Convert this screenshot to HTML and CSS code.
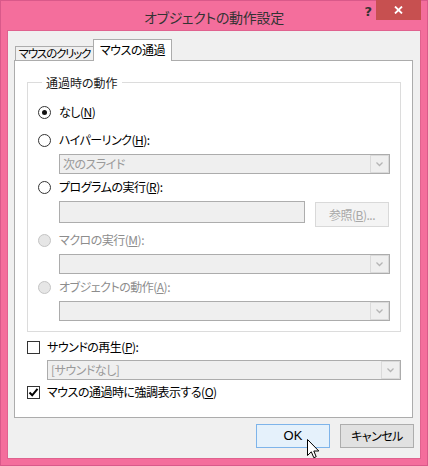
FILE: index.html
```html
<!DOCTYPE html>
<html lang="ja">
<head>
<meta charset="utf-8">
<title>オブジェクトの動作設定</title>
<link rel="stylesheet" href="styles.css">
</head>
<body>
<div class="window">
  <div class="titlebar">
    <div class="tb-side"></div>
    <div class="title">オブジェクトの動作設定</div>
    <div class="tb-side tb-controls">
      <span class="help">?</span>
      <span class="close"><svg width="9" height="8" viewBox="0 0 9 8"><path d="M1 0.5 L8 7.5 M8 0.5 L1 7.5" stroke="#fff" stroke-width="1.8" fill="none"/></svg></span>
    </div>
  </div>
  <div class="client">
    <div class="tabstrip">
      <div class="tab">マウスのクリック</div>
      <div class="tab active">マウスの通過</div>
    </div>
    <div class="panel">
      <div class="group">
        <div class="legend">通過時の動作</div>
        <div class="opt first">
          <span class="radio checked"></span><span class="lbl">なし(<u>N</u>)</span>
        </div>
        <div class="opt next">
          <span class="radio"></span><span class="lbl">ハイパーリンク(<u>H</u>):</span>
        </div>
        <div class="combo sub"><span class="combo-text">次のスライド</span><span class="arrow"><svg width="7" height="5" viewBox="0 0 7 5"><path d="M0.5 0.5 L3.5 3.5 L6.5 0.5" stroke="#b5b5b5" stroke-width="1.3" fill="none"/></svg></span></div>
        <div class="opt after">
          <span class="radio"></span><span class="lbl">プログラムの実行(<u>R</u>):</span>
        </div>
        <div class="inputrow sub">
          <div class="textbox"></div>
          <div class="browse">参照(<u>B</u>)...</div>
        </div>
        <div class="opt after">
          <span class="radio disabled"></span><span class="lbl dim">マクロの実行(<u>M</u>):</span>
        </div>
        <div class="combo sub"><span class="combo-text"></span><span class="arrow"><svg width="7" height="5" viewBox="0 0 7 5"><path d="M0.5 0.5 L3.5 3.5 L6.5 0.5" stroke="#b5b5b5" stroke-width="1.3" fill="none"/></svg></span></div>
        <div class="opt after">
          <span class="radio disabled"></span><span class="lbl dim">オブジェクトの動作(<u>A</u>):</span>
        </div>
        <div class="combo sub"><span class="combo-text"></span><span class="arrow"><svg width="7" height="5" viewBox="0 0 7 5"><path d="M0.5 0.5 L3.5 3.5 L6.5 0.5" stroke="#b5b5b5" stroke-width="1.3" fill="none"/></svg></span></div>
      </div>
      <div class="check-row sound">
        <span class="checkbox"></span><span class="lbl">サウンドの再生(<u>P</u>):</span>
      </div>
      <div class="combo sound-combo"><span class="combo-text">[サウンドなし]</span><span class="arrow"><svg width="7" height="5" viewBox="0 0 7 5"><path d="M0.5 0.5 L3.5 3.5 L6.5 0.5" stroke="#b5b5b5" stroke-width="1.3" fill="none"/></svg></span></div>
      <div class="check-row highlight">
        <span class="checkbox"><svg width="11" height="11" viewBox="0 0 11 11"><path d="M1.5 5.5 L4.2 8.3 L9.5 1.8" stroke="#000" stroke-width="2" fill="none"/></svg></span><span class="lbl">マウスの通過時に強調表示する(<u>O</u>)</span>
      </div>
    </div>
    <div class="buttons">
      <div class="btn default">OK</div>
      <div class="btn">キャンセル</div>
    </div>
  </div>
  <svg class="cursor" width="14" height="21" viewBox="0 0 14 21"><path d="M0.5 0.5 L0.5 16.5 L4.3 12.8 L6.8 18.7 L9.2 17.7 L6.8 12 L11.8 12 Z" fill="#fff" stroke="#000" stroke-width="1" stroke-linejoin="miter"/></svg>
</div>
</body>
</html>
```
FILE: styles.css
```css
* { box-sizing: border-box; }
html, body { margin: 0; padding: 0; }
body {
  font-family: "Noto Sans CJK JP", "Noto Sans", sans-serif;
  font-feature-settings: "palt" 1;
  font-size: 12px;
  letter-spacing: -0.5px;
  color: #000;
  background: #fff;
}
u { text-decoration: underline; text-underline-offset: 1px; }

.window {
  position: relative;
  width: 428px;
  height: 466px;
  background: #f46e9c;
  border: 1px solid #d9598a;
  display: flex;
  flex-direction: column;
}

.titlebar {
  height: 30px;
  display: grid;
  grid-template-columns: 1fr auto 1fr;
  padding: 0 6px;
}
.title {
  font-size: 14px;
  line-height: 30px;
  color: #333;
  padding-top: 1px;
  letter-spacing: -0.3px;
}
.tb-controls {
  display: flex;
  justify-content: flex-end;
  align-items: flex-start;
  margin-top: -1px;
}
.help {
  font-family: "DejaVu Sans", sans-serif;
  font-weight: bold;
  font-size: 13px;
  line-height: 16px;
  color: #333;
  margin-top: 4px;
  margin-right: 4px;
  letter-spacing: 0;
}
.close {
  width: 45px;
  height: 20px;
  background: #c75050;
  display: flex;
  align-items: center;
  justify-content: center;
}

.client {
  margin: 0 7px;
  height: 427px;
  background: #f0f0f0;
  padding: 8px 7px 0 6px;
  display: flex;
  flex-direction: column;
  box-shadow: 0 0 0 1px #e0628f;
}

.tabstrip {
  display: flex;
  align-items: flex-end;
  height: 21px;
  padding-left: 1px;
  position: relative;
  z-index: 1;
}
.tab {
  width: 79px;
  height: 14px;
  border: 1px solid #acacac;
  border-bottom: none;
  background: #f0f0f0;
  display: flex;
  justify-content: center;
  line-height: 13px;
  font-size: 11.5px;
  letter-spacing: -1.2px;
  color: #000;
  white-space: nowrap;
}
.tab.active {
  height: 22px;
  margin-left: -1px;
  margin-bottom: -1px;
  background: #fff;
  line-height: 20px;
  font-size: 12px;
  letter-spacing: -0.5px;
}

.panel {
  height: 358px;
  background: #fff;
  border: 1px solid #acacac;
  padding: 0 11px 0 12px;
  display: flex;
  flex-direction: column;
}

.group {
  margin-top: 21px;
  border: 1px solid #dcdcdc;
  padding: 0 10px 10px 10px;
  display: flex;
  flex-direction: column;
}
.legend {
  align-self: flex-start;
  margin: -8px 0 0 4px;
  padding: 0 4px;
  background: #fff;
  line-height: 16px;
  color: #1a1a1a;
  letter-spacing: 0;
}

.opt, .check-row {
  display: flex;
  align-items: center;
  height: 20px;
  white-space: nowrap;
}
.opt.first { margin-top: 11px; }
.opt.next { margin-top: 8px; }
.opt.after { margin-top: 3px; }
.sub { margin-top: 4px; margin-left: 21px; }

.lbl { line-height: 16px; }
.dim { color: #8d8d8d; }
.opt .lbl { margin-left: 8px; }
.check-row .lbl { margin-left: 7px; }

.radio {
  width: 13px;
  height: 13px;
  border: 1px solid #333;
  border-radius: 50%;
  background: #fff;
  display: flex;
  align-items: center;
  justify-content: center;
  flex: none;
}
.radio.checked::after {
  content: "";
  width: 5px;
  height: 5px;
  border-radius: 50%;
  background: #111;
}
.radio.disabled {
  border-color: #c4c4c4;
  background: #e6e6e6;
}

.checkbox {
  width: 13px;
  height: 13px;
  border: 1px solid #333;
  background: #fff;
  display: flex;
  align-items: center;
  justify-content: center;
  flex: none;
}

.combo {
  height: 20px;
  border: 1px solid #acacac;
  background: #efefef;
  display: flex;
  align-items: stretch;
}
.combo-text {
  flex: 1;
  padding-left: 3px;
  line-height: 17px;
  color: #9a9a9a;
}
.arrow {
  width: 19px;
  border: 1px solid #dadada;
  display: flex;
  align-items: center;
  justify-content: center;
  padding-top: 1px;
}

.inputrow {
  display: flex;
  align-items: flex-start;
  gap: 10px;
  margin-right: 1px;
  height: 26px;
}
.textbox {
  flex: 1;
  height: 22px;
  border: 1px solid #adadad;
  background: #efefef;
}
.browse {
  width: 74px;
  height: 25px;
  margin-top: 1px;
  border: 1px solid #d9d9d9;
  background: #f4f4f4;
  color: #a8a8a8;
  text-align: center;
  line-height: 23px;
}

.check-row.sound { margin-top: 5px; }
.sound-combo { margin-top: 3px; margin-left: 20px; }
.check-row.highlight { margin-top: 2px; }

.buttons {
  display: flex;
  justify-content: flex-end;
  gap: 10px;
  margin-top: 6px;
  margin-right: -1px;
}
.btn {
  width: 74px;
  height: 24px;
  border: 1px solid #adadad;
  background: #e1e1e1;
  text-align: center;
  line-height: 22px;
  color: #000;
}
.btn.default {
  border-color: #7eb4ea;
  background: #e5f1fb;
  font-family: "Liberation Sans", "Noto Sans CJK JP", sans-serif;
  font-size: 13px;
  letter-spacing: 0;
}

.cursor {
  position: absolute;
  left: 306px;
  top: 438px;
}
```
